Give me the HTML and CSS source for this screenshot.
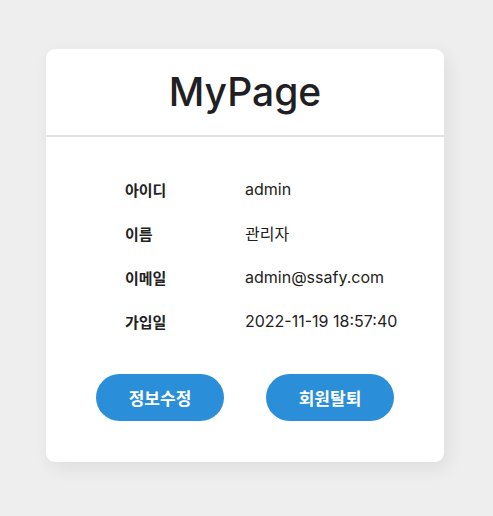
FILE: index.html
```html
<!DOCTYPE html>
<html lang="ko">
<head>
<meta charset="utf-8">
<link rel="stylesheet" href="styles.css">
</head>
<body>
<div class="card">
  <div class="card-header"><h1 class="title">MyPage</h1></div>
  <div class="card-body">
    <dl class="info">
      <div class="row"><dt>아이디</dt><dd>admin</dd></div>
      <div class="row"><dt>이름</dt><dd>관리자</dd></div>
      <div class="row"><dt>이메일</dt><dd>admin@ssafy.com</dd></div>
      <div class="row"><dt>가입일</dt><dd>2022-11-19 18:57:40</dd></div>
    </dl>
    <div class="actions">
      <button class="btn">정보수정</button>
      <button class="btn">회원탈퇴</button>
    </div>
  </div>
</div>
</body>
</html>
```
FILE: styles.css
```css
html, body { margin: 0; padding: 0; }
body {
  background: #eeeeee;
  font-family: Inter, "Noto Sans CJK KR", sans-serif;
  color: #222;
  height: 516px;
}
.card {
  width: 398px;
  margin: 49px 0 0 46px;
  background: #fff;
  border-radius: 9px;
  box-shadow: 4px 6px 18px rgba(0,0,0,0.07);
  height: 413px;
  box-sizing: border-box;
}
.card-header {
  height: 86px;
  border-bottom: 2px solid #e2e2e2;
  display: flex;
  align-items: center;
  justify-content: center;
}
.title {
  margin: 0;
  font-size: 39px;
  font-weight: 500;
  color: #1f2023;
  line-height: 1;
  padding-bottom: 2px;
}
.card-body { padding: 30px 0 0 79px; }
.info { margin: 0; }
.row {
  display: flex;
  height: 44px;
  align-items: center;
  font-size: 15px;
}
.row dt { width: 120px; font-weight: 700; }
.row dd { margin: 0; font-size: 16px; }
.actions {
  display: flex;
  gap: 42px;
  margin: 31px 0 0 -29px;
}
.btn {
  width: 128px;
  height: 47px;
  border: none;
  border-radius: 24px;
  background: #2a8fd8;
  color: #fff;
  font-family: inherit;
  font-size: 17px;
  font-weight: 700;
}
```
